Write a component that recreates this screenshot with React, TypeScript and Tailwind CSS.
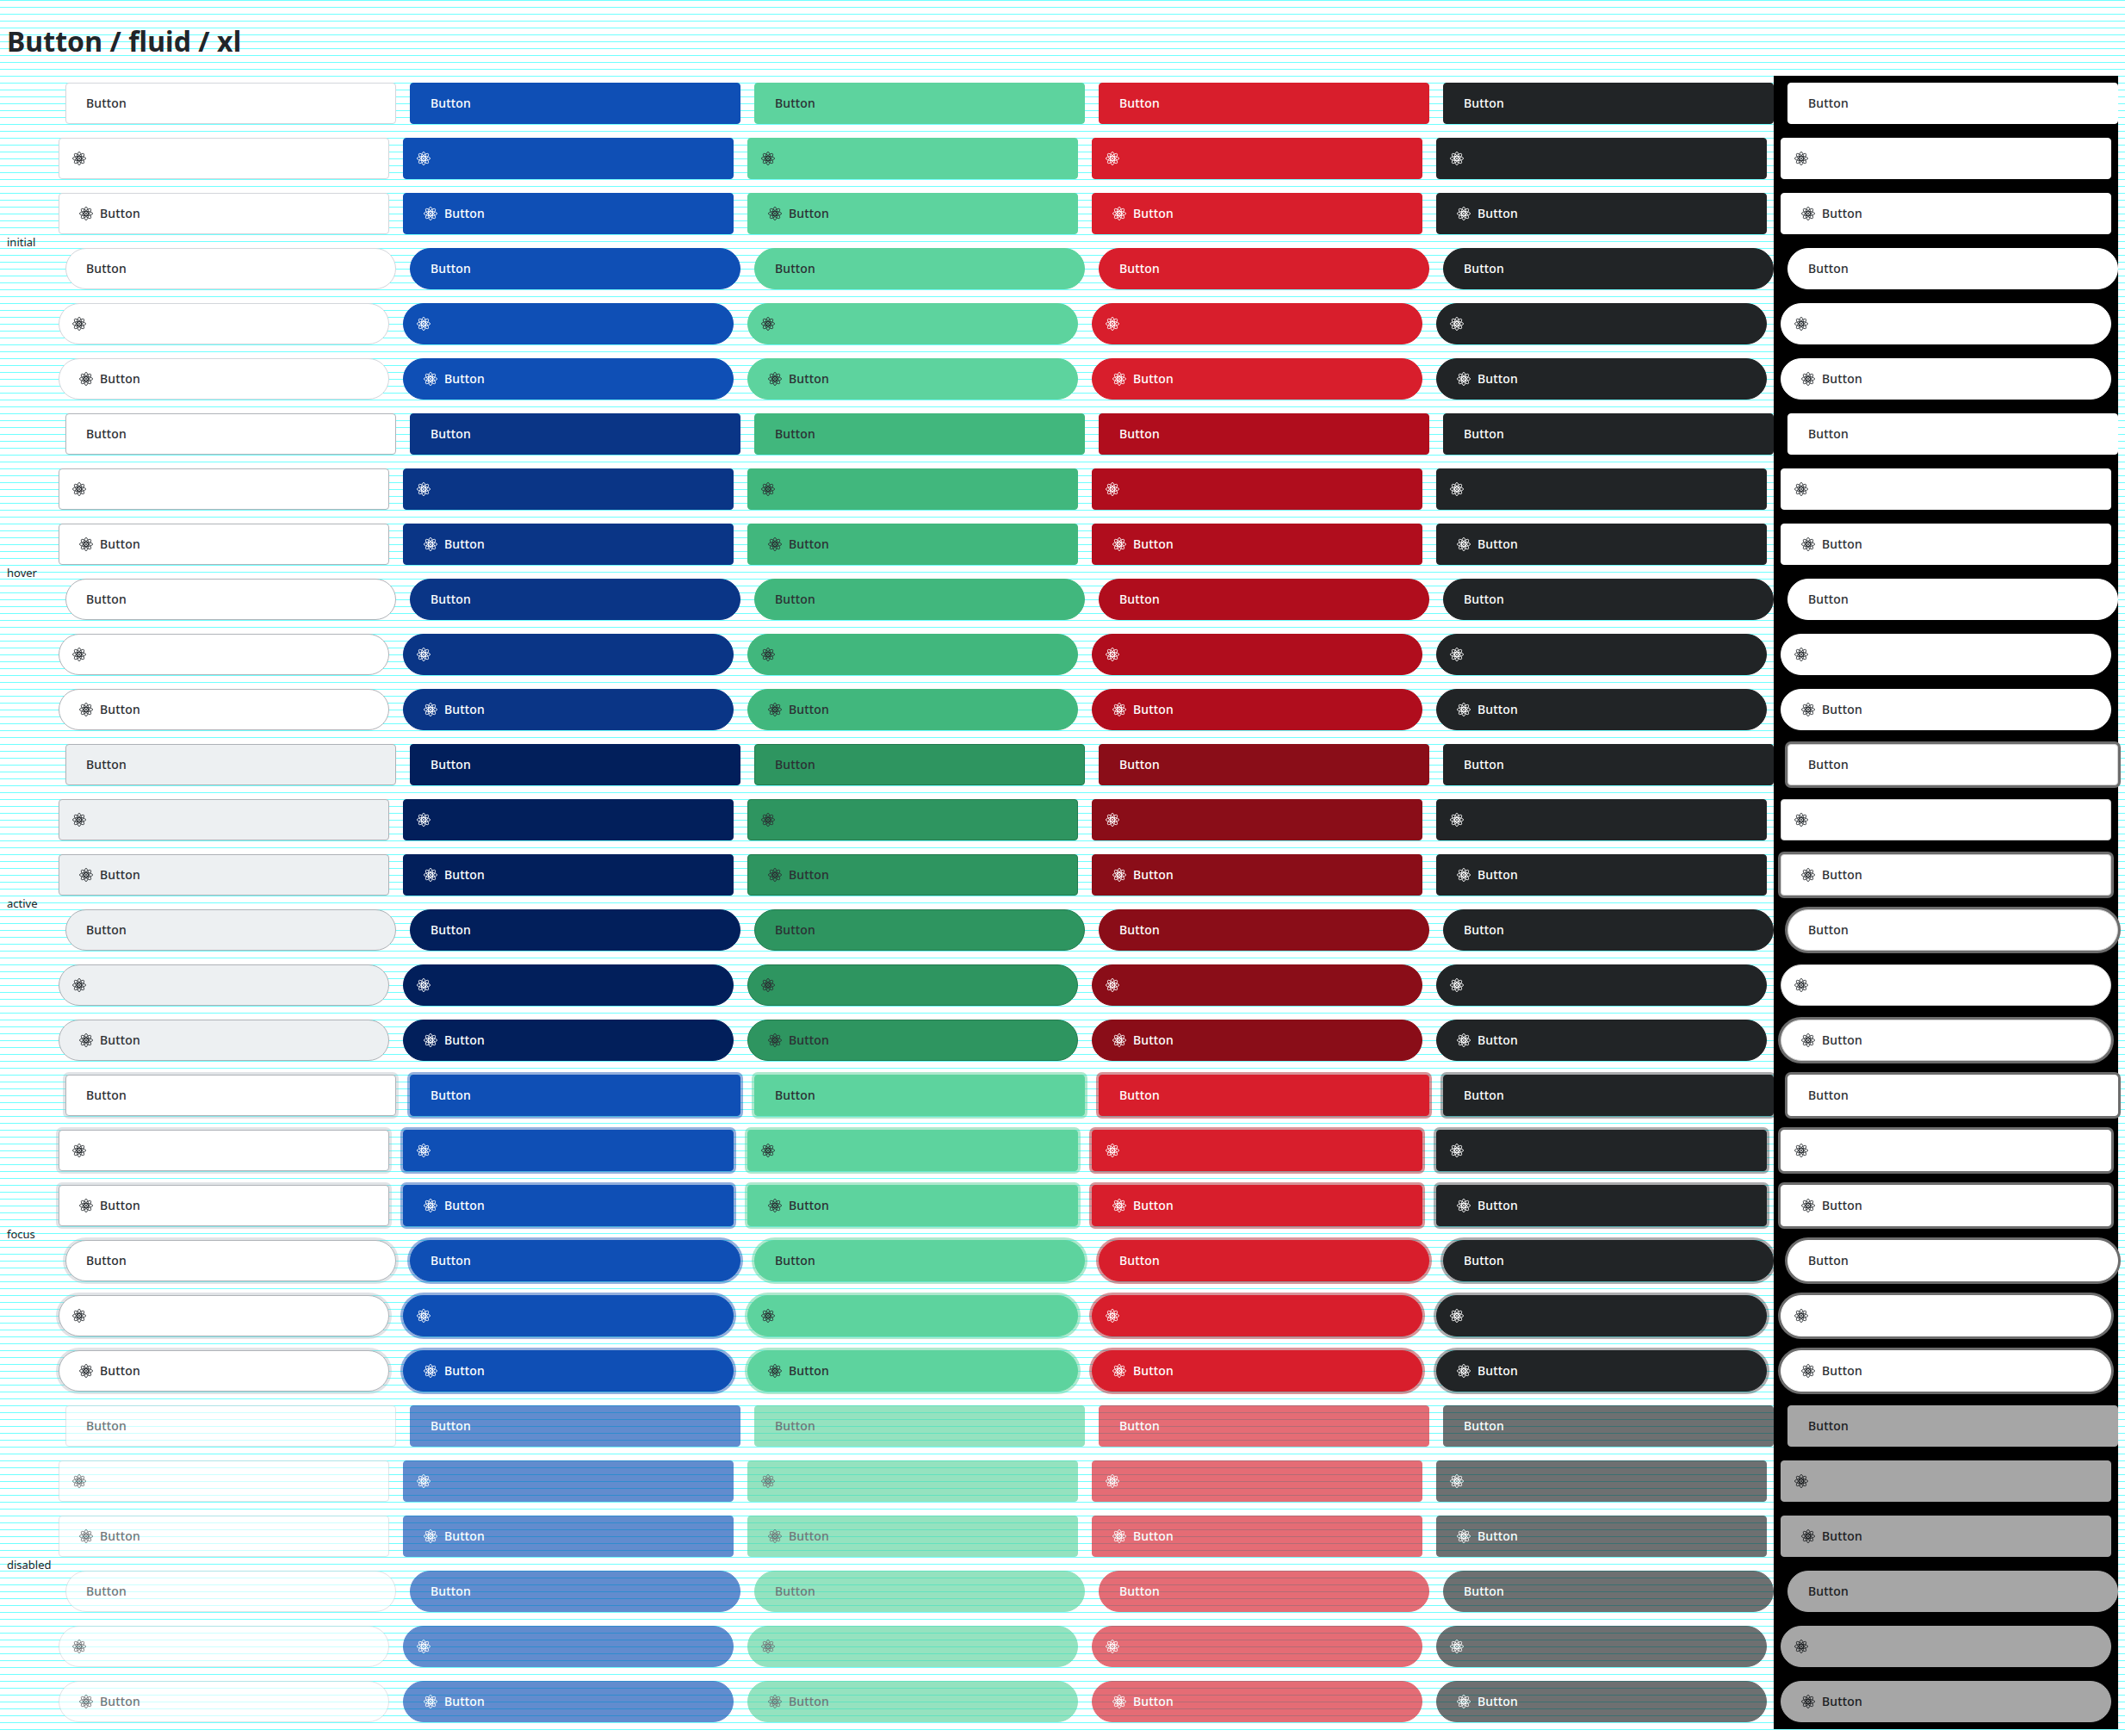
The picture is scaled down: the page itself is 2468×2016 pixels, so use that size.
const states = ["initial", "hover", "active", "focus", "disabled"] as const;
type State = (typeof states)[number];
type Kind = "text" | "icon" | "both";

// order of rows inside one state group
const rows: { kind: Kind; pill: boolean }[] = [
  { kind: "text", pill: false },
  { kind: "icon", pill: false },
  { kind: "both", pill: false },
  { kind: "text", pill: true },
  { kind: "icon", pill: true },
  { kind: "both", pill: true },
];

const columns: { text: string; styles: Record<State, string> }[] = [
  {
    text: "text-[#2b2f33]",
    styles: {
      initial: "bg-white border-[#d3d6db]",
      hover: "bg-white border-[#b0b4b9]",
      active: "bg-[#edf0f2] border-[#aeb2b7]",
      focus: "bg-white border-[#b0b4b9] shadow-[0_0_0_3px_rgba(173,181,189,0.36)]",
      disabled: "bg-white border-[#d3d6db] opacity-65",
    },
  },
  {
    text: "text-white",
    styles: {
      initial: "bg-[#0f4fb5] border-[#0f4fb5]",
      hover: "bg-[#0a3586] border-[#0a3586]",
      active: "bg-[#021f5b] border-[#021f5b]",
      focus: "bg-[#0f4fb5] border-[#0f4fb5] shadow-[0_0_0_3px_rgba(15,79,181,0.45)]",
      disabled: "bg-[#0f4fb5] border-[#0f4fb5] opacity-65",
    },
  },
  {
    text: "text-[#2b2f33]",
    styles: {
      initial: "bg-[#5dd39e] border-[#5dd39e]",
      hover: "bg-[#41b77d] border-[#41b77d]",
      active: "bg-[#2e9560] border-[#237a4e]",
      focus: "bg-[#5dd39e] border-[#5dd39e] shadow-[0_0_0_3px_rgba(93,211,158,0.5)]",
      disabled: "bg-[#5dd39e] border-[#5dd39e] opacity-65",
    },
  },
  {
    text: "text-white",
    styles: {
      initial: "bg-[#d81e2c] border-[#d81e2c]",
      hover: "bg-[#b00d1d] border-[#b00d1d]",
      active: "bg-[#8a0d18] border-[#8a0d18]",
      focus: "bg-[#d81e2c] border-[#d81e2c] shadow-[0_0_0_3px_rgba(180,40,50,0.5)]",
      disabled: "bg-[#d81e2c] border-[#d81e2c] opacity-65",
    },
  },
  {
    text: "text-white",
    styles: {
      initial: "bg-[#212426] border-[#212426]",
      hover: "bg-[#212426] border-[#212426]",
      active: "bg-[#212426] border-[#212426]",
      focus: "bg-[#212426] border-[#212426] shadow-[0_0_0_3px_rgba(33,37,41,0.38)]",
      disabled: "bg-[#212426] border-[#212426] opacity-65",
    },
  },
  {
    text: "text-[#2b2f33]",
    styles: {
      initial: "bg-white border-white",
      hover: "bg-white border-white",
      active: "bg-white border-[#d0d0d0] shadow-[0_0_0_3px_#6c6c6c]",
      focus: "bg-white border-white shadow-[0_0_0_3px_#6c6c6c]",
      disabled: "bg-white border-white opacity-65",
    },
  },
];

function AtomIcon() {
  return (
    <svg width="16" height="16" viewBox="0 0 16 16" fill="none" stroke="currentColor" strokeWidth="0.85" className="shrink-0">
      <ellipse cx="8" cy="8" rx="2.6" ry="7.6" />
      <ellipse cx="8" cy="8" rx="2.6" ry="7.6" transform="rotate(45 8 8)" />
      <ellipse cx="8" cy="8" rx="2.6" ry="7.6" transform="rotate(90 8 8)" />
      <ellipse cx="8" cy="8" rx="2.6" ry="7.6" transform="rotate(135 8 8)" />
      <circle cx="8" cy="8" r="2.4" strokeWidth="1" />
      <circle cx="8" cy="8" r="1" fill="currentColor" stroke="none" />
    </svg>
  );
}

function DemoButton({ kind, pill, className }: { kind: Kind; pill: boolean; className: string }) {
  return (
    <button
      disabled={className.includes("opacity-65")}
      className={`flex h-12 w-96 items-center gap-2 border text-left text-sm font-medium ${pill ? "rounded-3xl" : "rounded"} ${
        kind === "icon" ? "pl-[15px]" : "pl-[23px]"
      } ${className}`}
    >
      {kind !== "text" && <AtomIcon />}
      {kind !== "icon" && <span className="tracking-[0.01em]">Button</span>}
    </button>
  );
}

export default function App() {
  return (
    <div className="min-h-[2016px] bg-[linear-gradient(#70ffff_1px,#ffffff_1px)] bg-[size:100%_8px] font-['Noto_Sans',sans-serif] text-[#212529]">
      <h1 className="h-[88px] pl-2 pt-6 text-[32px] font-bold leading-12 tracking-[0.002em]">Button / fluid / xl</h1>

      <div className="flex">
        {/* state labels */}
        <div className="w-[60px] shrink-0 pl-2">
          {states.map((state) => (
            <div key={state} className="flex h-[384px] items-center pt-[3px] text-[13px]">
              {state}
            </div>
          ))}
        </div>

        {columns.map((col, i) => (
          <div key={i} className={`w-[400px] shrink-0 ${i === 5 ? "bg-black" : ""}`}>
            {states.map((state) =>
              rows.map((row, r) => {
                // the ring on the light column's active state skips icon-only rows
                const style =
                  i === 5 && state === "active" && row.kind === "icon" ? "bg-white border-[#d0d0d0]" : col.styles[state];
                return (
                  <div key={state + r} className={`h-16 py-2 ${row.kind === "text" ? "pl-4" : "pl-2"}`}>
                    <DemoButton kind={row.kind} pill={row.pill} className={`${col.text} ${style}`} />
                  </div>
                );
              })
            )}
          </div>
        ))}
      </div>
    </div>
  );
}
